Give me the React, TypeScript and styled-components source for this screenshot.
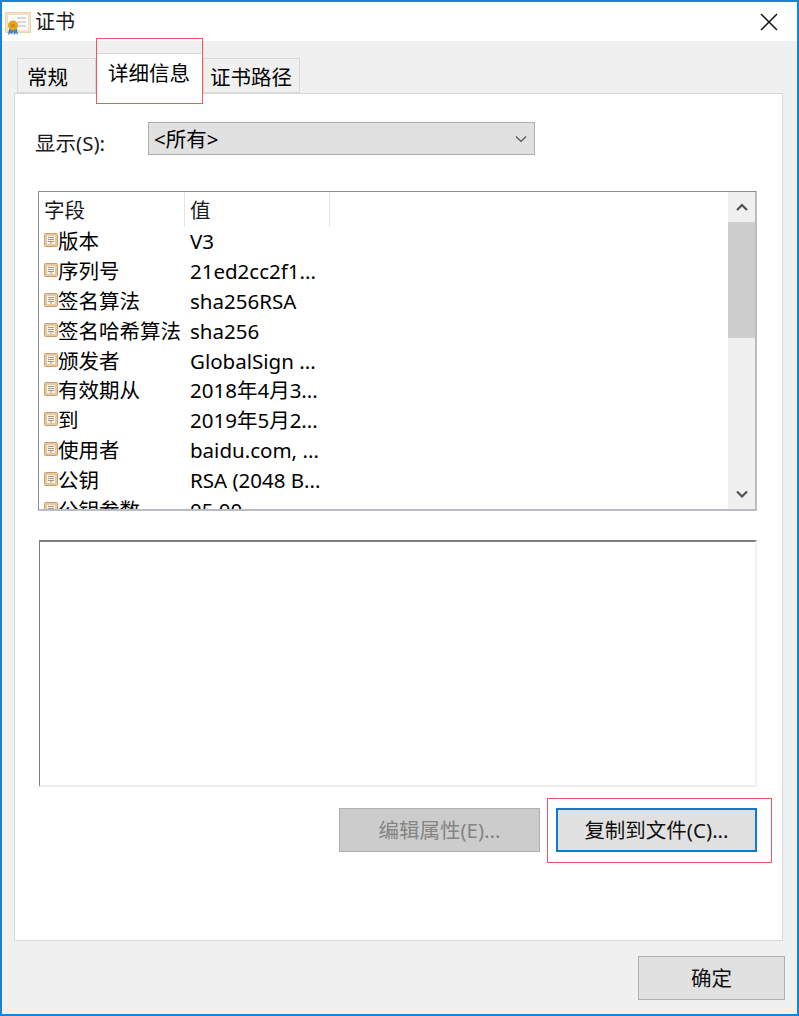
import React from 'react';
import styled, {createGlobalStyle} from 'styled-components';

const GlobalStyle = createGlobalStyle`
  html, body {
    margin: 0;
    padding: 0;
    background: #ffffff;
  }
  * {
    box-sizing: border-box;
  }
`;

const Window = styled.div`
  width: 799px;
  height: 1016px;
  display: flex;
  flex-direction: column;
  border: 2px solid #1883d7;
  background: #f0f0f0;
  color: #000;
  font-family: 'Noto Sans', 'Noto Sans CJK SC', sans-serif;
  font-size: 20.5px;
  line-height: 28px;
  overflow: hidden;
`;

const TitleBar = styled.div`
  height: 39px;
  flex: none;
  display: flex;
  align-items: center;
  padding: 0 19px 0 2px;
  background: #fff;
`;

const TitleText = styled.div`
  flex: 1;
  margin-left: 3px;
  font-size: 20px;
  color: #1a1a1a;
`;

const Body = styled.div`
  flex: 1;
  display: flex;
  flex-direction: column;
  padding: 12px 14px 0 12px;
`;

const Tabs = styled.div`
  height: 40px;
  flex: none;
  display: flex;
  align-items: flex-end;
  padding-left: 3px;
`;

const Tab = styled.div<{$active?: boolean; $width: number; $pad: number}>`
  position: relative;
  width: ${({$width}) => $width}px;
  height: ${({$active}) => ($active ? 41 : 35)}px;
  margin-bottom: ${({$active}) => ($active ? -1 : 0)}px;
  padding-top: ${({$active}) => ($active ? 5 : 4)}px;
  padding-left: ${({$pad}) => $pad}px;
  white-space: nowrap;
  background: ${({$active}) => ($active ? '#fff' : '#f0f0f0')};
  border: 1px solid #d9d9d9;
  border-bottom: ${({$active}) => ($active ? 'none' : '1px solid #d9d9d9')};
  z-index: ${({$active}) => ($active ? 1 : 0)};
`;

const Callout = styled.div<{$top: number; $left: number; $right: number; $bottom: number}>`
  position: absolute;
  top: ${({$top}) => $top}px;
  left: ${({$left}) => $left}px;
  right: ${({$right}) => $right}px;
  bottom: ${({$bottom}) => $bottom}px;
  border: 1px solid #f4565a;
  pointer-events: none;
`;

const Panel = styled.div`
  height: 848px;
  flex: none;
  display: flex;
  flex-direction: column;
  background: #fff;
  border: 1px solid #d9d9d9;
  padding: 28px 25px 0 23px;
`;

const ShowRow = styled.div`
  height: 33px;
  flex: none;
  display: flex;
  align-items: flex-start;
`;

const ShowLabel = styled.div`
  width: 113px;
  margin-left: -3px;
  padding-top: 7px;
  color: #1a1a1a;
`;

const Select = styled.div`
  width: 387px;
  height: 33px;
  display: flex;
  align-items: center;
  justify-content: space-between;
  padding: 0 6px 0 5px;
  background: #e1e1e1;
  border: 1px solid #adadad;
`;

const FieldList = styled.div`
  width: 719px;
  height: 320px;
  flex: none;
  margin-top: 36px;
  display: flex;
  overflow: hidden;
  border: 1px solid #8e8f94;
  border-right: 2px solid #b9bcc2;
  border-bottom: 2px solid #b9bcc2;
`;

const Table = styled.div`
  flex: 1;
  min-width: 0;
  overflow: hidden;
`;

const HeaderRow = styled.div`
  height: 34.5px;
  display: flex;
`;

const HeaderCell = styled.div<{$width: number}>`
  width: ${({$width}) => $width}px;
  height: 34.5px;
  padding: 4px 0 0 5px;
  border-right: 1px solid #e5e5e5;
  color: #1a1a1a;
`;

const Row = styled.div`
  height: 29.8px;
  flex: none;
  display: flex;
  align-items: center;
  white-space: nowrap;
`;

const NameCell = styled.div`
  width: 145px;
  display: flex;
  align-items: center;
  padding-left: 5px;
`;

const ValueCell = styled.div`
  padding-left: 6px;
`;

const Scrollbar = styled.div`
  width: 27px;
  flex: none;
  display: flex;
  flex-direction: column;
  background: #f0f0f0;
`;

const ScrollArrow = styled.div`
  height: 30px;
  flex: none;
  display: flex;
  align-items: center;
  justify-content: center;
`;

const ScrollThumb = styled.div`
  height: 116px;
  flex: none;
  background: #cdcdcd;
`;

const ScrollTrack = styled.div`
  flex: 1;
`;

const DetailBox = styled.div`
  width: 718px;
  height: 247px;
  flex: none;
  margin: 29px 0 0 1px;
  background: #fff;
  border-top: 2px solid #7f7f7f;
  border-left: 1px solid #7f7f7f;
  border-right: 2px solid #f0f0f0;
  border-bottom: 2px solid #ececec;
`;

const ButtonRow = styled.div`
  width: 719px;
  flex: none;
  margin-top: 21px;
  display: flex;
  justify-content: flex-end;
  gap: 16px;
`;

const Button = styled.div<{$disabled?: boolean; $focused?: boolean; $width: number}>`
  position: relative;
  width: ${({$width}) => $width}px;
  height: 44px;
  display: flex;
  align-items: center;
  justify-content: center;
  background: ${({$disabled}) => ($disabled ? '#cccccc' : '#e1e1e1')};
  color: ${({$disabled}) => ($disabled ? '#848484' : '#111')};
  border: ${({$focused}) => ($focused ? '2px solid #0f7ad3' : '1px solid #b0b0b0')};
`;

const Footer = styled.div`
  flex: 1;
  display: flex;
  justify-content: flex-end;
  padding: 15px 0 0 0;
  margin-right: -2px;
`;

const fields: [string, string][] = [
  ['版本', 'V3'],
  ['序列号', '21ed2cc2f1...'],
  ['签名算法', 'sha256RSA'],
  ['签名哈希算法', 'sha256'],
  ['颁发者', 'GlobalSign ...'],
  ['有效期从', '2018年4月3...'],
  ['到', '2019年5月2...'],
  ['使用者', 'baidu.com, ...'],
  ['公钥', 'RSA (2048 B...'],
  ['公钥参数', '05 00'],
];

const CertIcon = () => (
  <svg width="28" height="24" viewBox="0 0 28 24" style={{marginTop: 5}}>
    <rect x="1.5" y="0.5" width="25" height="20" fill="#f3e0c4" stroke="#e8d3b3" />
    <rect x="4" y="3" width="20" height="15" fill="#fbfbfb" />
    <rect x="13" y="5" width="9" height="2" fill="#d8d8d8" />
    <rect x="13" y="9" width="9" height="2" fill="#d8d8d8" />
    <rect x="13" y="13" width="9" height="2" fill="#d8d8d8" />
    <path d="M5 17l-1 6 3-2 1 2 2-6zM9 17l1 6 2-2 2 2-1-6z" fill="#3b82d6" />
    <circle cx="9" cy="13.5" r="5" fill="#e2a520" />
    <circle cx="9" cy="13.5" r="1.8" fill="#c98a10" />
  </svg>
);

const FieldIcon = () => (
  <svg width="14" height="14" viewBox="0 0 14 14" style={{flex: 'none', marginTop: -2}}>
    <rect x="0.5" y="0.5" width="13" height="13" rx="1" fill="#e9c8a0" stroke="#c99e6f" />
    <rect x="3" y="3" width="8" height="8" fill="#f8f3e8" />
    <path d="M4 4.5h6M4 6.5h6M4 8.5h6M7 9v2" stroke="#a39a8c" strokeWidth="1" fill="none" />
  </svg>
);

const Chevron = ({size, up}: {size: number; up?: boolean}) => (
  <svg width={size} height={size} viewBox="0 0 14 14">
    <path
      d={up ? 'M2 10l5-5 5 5' : 'M2 4.5l5 5 5-5'}
      fill="none"
      stroke="#505050"
      strokeWidth={up === undefined ? 1.2 : 2.2}
    />
  </svg>
);

const CloseIcon = () => (
  <svg width="18" height="18" viewBox="0 0 18 18">
    <path d="M1 1l16 16M17 1L1 17" stroke="#111" strokeWidth="1.5" fill="none" />
  </svg>
);

export default function App() {
  return (
    <>
      <GlobalStyle />
      <Window>
        <TitleBar>
          <CertIcon />
          <TitleText>证书</TitleText>
          <CloseIcon />
        </TitleBar>
        <Body>
          <Tabs>
            <Tab $width={79} $pad={9}>常规</Tab>
            <Tab $active $width={107} $pad={11}>
              详细信息
              <Callout $top={-16} $left={-1} $right={-1} $bottom={-10} />
            </Tab>
            <Tab $width={97} $pad={6}>证书路径</Tab>
          </Tabs>
          <Panel>
            <ShowRow>
              <ShowLabel>显示(S):</ShowLabel>
              <Select>
                &lt;所有&gt;
                <Chevron size={14} />
              </Select>
            </ShowRow>
            <FieldList>
              <Table>
                <HeaderRow>
                  <HeaderCell $width={146}>字段</HeaderCell>
                  <HeaderCell $width={145}>值</HeaderCell>
                </HeaderRow>
                {fields.map(([name, value]) => (
                  <Row key={name}>
                    <NameCell>
                      <FieldIcon />
                      {name}
                    </NameCell>
                    <ValueCell>{value}</ValueCell>
                  </Row>
                ))}
              </Table>
              <Scrollbar>
                <ScrollArrow>
                  <Chevron size={14} up />
                </ScrollArrow>
                <ScrollThumb />
                <ScrollTrack />
                <ScrollArrow>
                  <Chevron size={14} up={false} />
                </ScrollArrow>
              </Scrollbar>
            </FieldList>
            <DetailBox />
            <ButtonRow>
              <Button $disabled $width={201}>
                编辑属性(E)...
              </Button>
              <Button $focused $width={201}>
                复制到文件(C)...
                <Callout $top={-12} $left={-11} $right={-17} $bottom={-13} />
              </Button>
            </ButtonRow>
          </Panel>
          <Footer>
            <Button $width={147}>确定</Button>
          </Footer>
        </Body>
      </Window>
    </>
  );
}
